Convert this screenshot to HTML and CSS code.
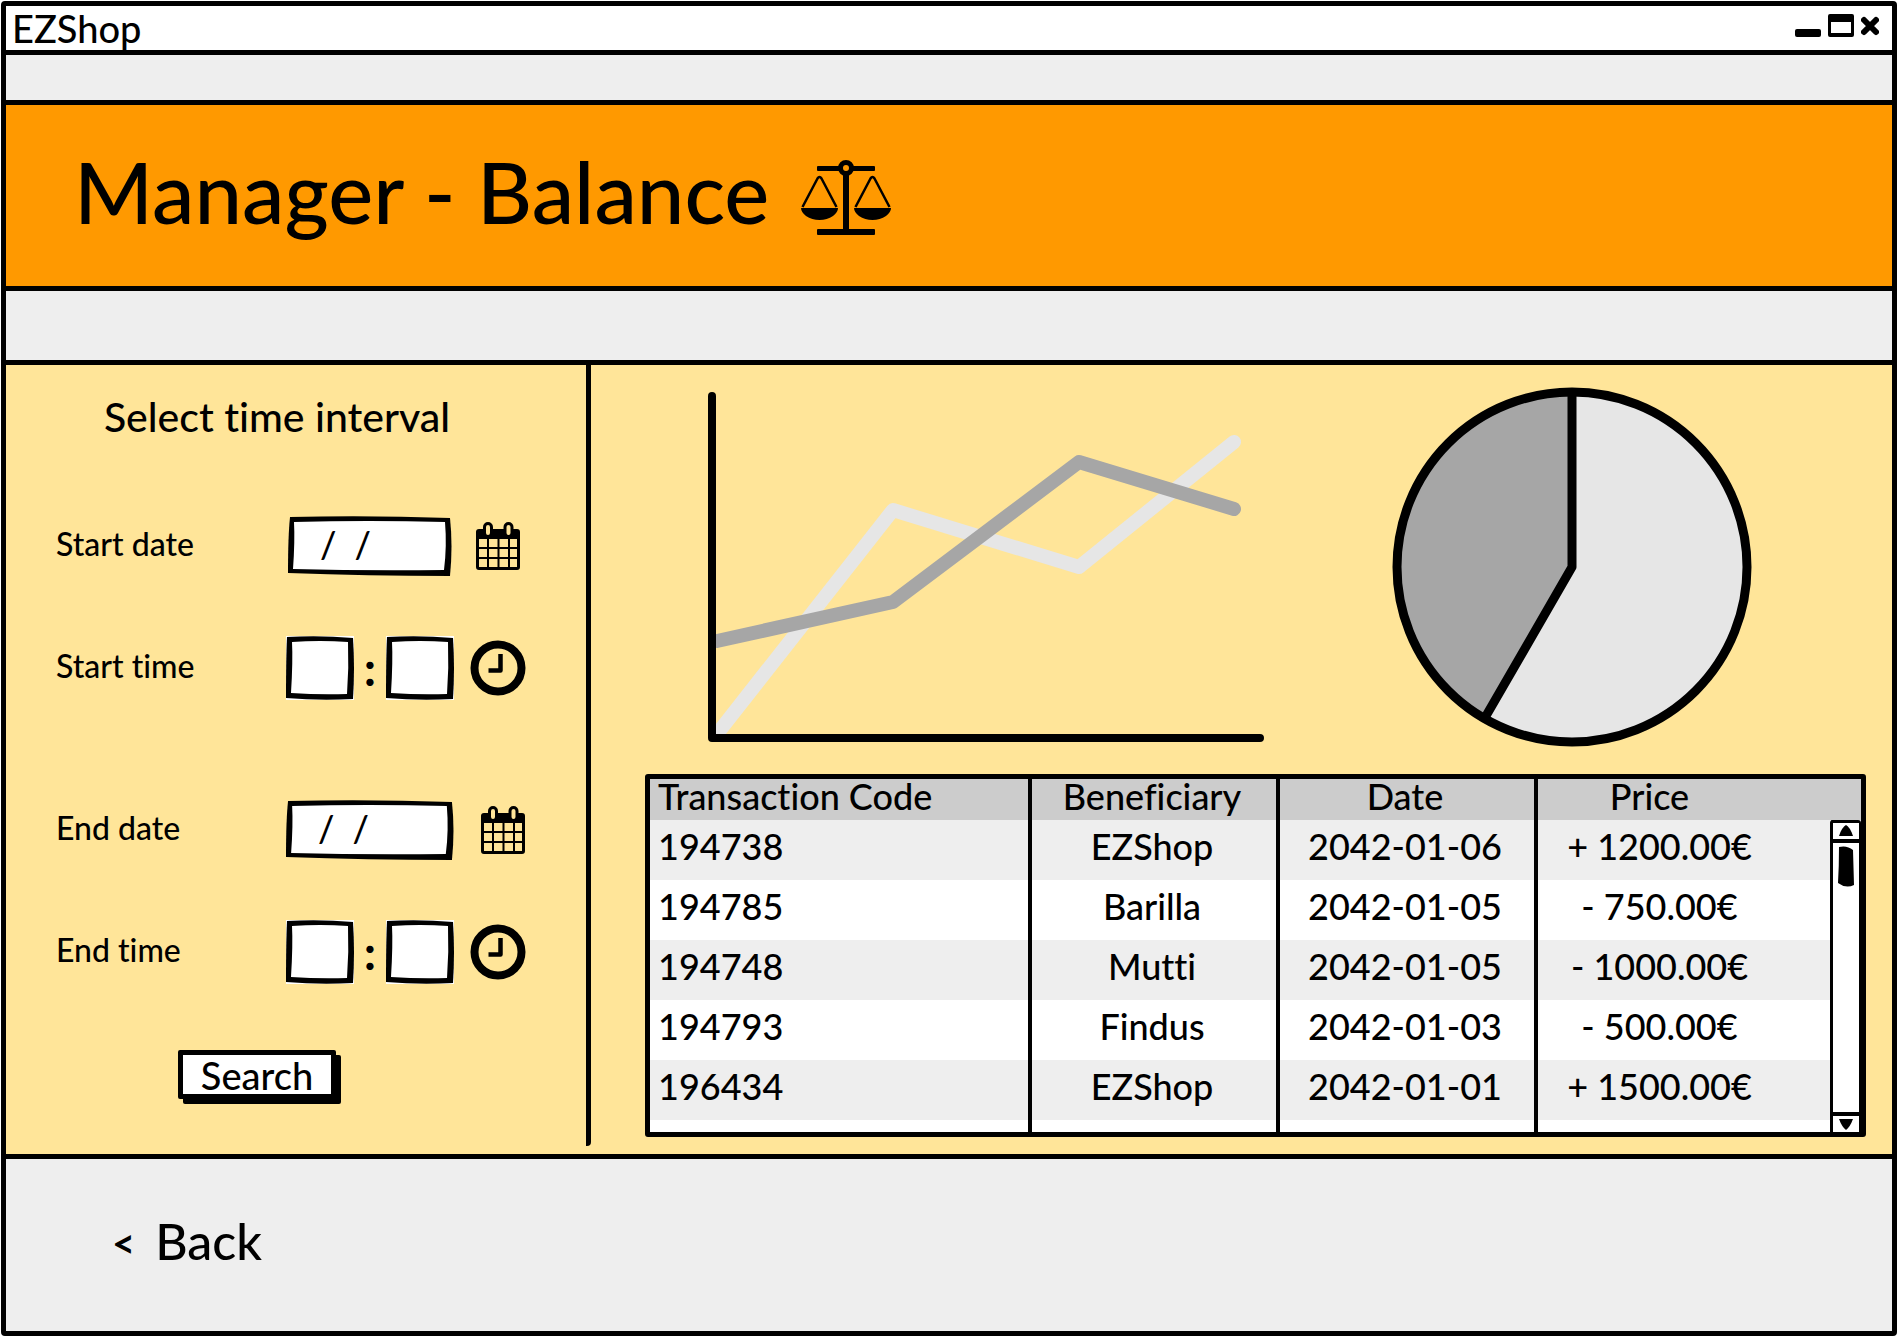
FILE: index.html
```html
<!DOCTYPE html>
<html lang="en">
<head>
<meta charset="utf-8">
<title>EZShop</title>
<meta name="viewport" content="width=device-width, initial-scale=1">
<link rel="stylesheet" href="styles.css">
</head>
<body>
<div class="window">
  <div class="titlebar">
    <span class="titlebar-name">EZShop</span>
    <div class="titlebar-controls">
      <button class="control" type="button" aria-label="Minimize"><svg width="26" height="24" viewBox="0 0 26 24"><rect y="15" width="26" height="8" rx="2"/></svg></button>
      <button class="control" type="button" aria-label="Maximize"><svg width="26" height="24" viewBox="0 0 26 24"><path fill-rule="evenodd" d="M2 0H24Q26 0 26 2V21Q26 23 24 23H2Q0 23 0 21V2Q0 0 2 0ZM3 8V19H23V8Z"/></svg></button>
      <button class="control" type="button" aria-label="Close"><svg width="18" height="24" viewBox="0 0 18 24"><path d="M3 6L15 18M15 6L3 18" stroke="#000" stroke-width="6" stroke-linecap="round"/></svg></button>
    </div>
  </div>

  <header class="banner">
    <h1 class="banner-title">Manager - Balance</h1>
    <svg class="banner-icon" width="90" height="76" viewBox="0 0 90 76" aria-hidden="true">
      <rect x="16" y="6" width="58" height="5" rx="1"/>
      <rect x="16" y="69" width="58" height="6" rx="1"/>
      <rect x="42" y="10" width="6" height="62"/>
      <circle cx="45" cy="8" r="5.5" fill="#ff9900" stroke="#000" stroke-width="5"/>
      <g fill="none" stroke="#000" stroke-width="2.5" stroke-linejoin="round">
        <path d="M1.5 47L16.500 18.500Q18.500 15.500 20.500 18.500L35.500 47"/>
        <path d="M54.500 47L69.500 18.500Q71.500 15.500 73.500 18.500L88.500 47"/>
      </g>
      <path d="M0 48H37Q37 52 32 56Q26 60 18.500 60Q11 60 5 56Q0 52 0 48Z"/>
      <path d="M53 48H90Q90 52 85 56Q79 60 71.500 60Q64 60 58 56Q53 52 53 48Z"/>
    </svg>
  </header>

  <main class="content">
    <form class="filter">
      <h2 class="filter-title">Select time interval</h2>
      <div class="filter-group">
        <label class="filter-label" for="start-date">Start date</label>
        <input class="date-box" id="start-date" type="text" value="/  /">
        <svg class="filter-icon" width="46" height="48" viewBox="0 0 46 48" aria-hidden="true"><use href="#calendar"/></svg>

        <label class="filter-label" for="start-hour">Start time</label>
        <div class="time-field">
          <input class="time-box" id="start-hour" type="text">
          <span class="time-colon">:</span>
          <input class="time-box" type="text" aria-label="Start minute">
        </div>
        <svg class="filter-icon" width="56" height="56" viewBox="0 0 56 56" aria-hidden="true"><use href="#clock"/></svg>
      </div>
      <div class="filter-group">
        <label class="filter-label" for="end-date">End date</label>
        <input class="date-box date-box-wide" id="end-date" type="text" value="/  /">
        <svg class="filter-icon filter-icon-end" width="46" height="48" viewBox="0 0 46 48" aria-hidden="true"><use href="#calendar"/></svg>

        <label class="filter-label" for="end-hour">End time</label>
        <div class="time-field">
          <input class="time-box" id="end-hour" type="text">
          <span class="time-colon">:</span>
          <input class="time-box" type="text" aria-label="End minute">
        </div>
        <svg class="filter-icon" width="56" height="56" viewBox="0 0 56 56" aria-hidden="true"><use href="#clock"/></svg>
      </div>
      <button class="search" type="button">Search</button>
    </form>

    <section class="report">
      <div class="charts">
        <svg class="line-chart" viewBox="708 392 556 350" role="img" aria-label="Balance over time">
          <g fill="none" stroke-width="14" stroke-linecap="round" stroke-linejoin="round">
            <path stroke="#e6e6e6" d="M717 734L893 510L1079 567L1234 442"/>
            <path stroke="#a6a6a6" d="M717 641L893 602L1079 462L1234 509"/>
            <path stroke="#000" stroke-width="8" d="M712 396V738H1260"/>
          </g>
        </svg>
        <svg class="pie-chart" viewBox="0 0 360 360" role="img" aria-label="Income and expenses">
          <circle cx="180" cy="180" r="175" fill="#e6e6e6"/>
          <path fill="#a6a6a6" d="M180 180L92.500 331.600A175 175 0 0 1 180 5Z"/>
          <path fill="none" stroke="#000" stroke-width="9" stroke-linejoin="round" d="M180 5V180L92.500 331.600"/>
          <circle cx="180" cy="180" r="175" fill="none" stroke="#000" stroke-width="9"/>
        </svg>
      </div>

      <div class="ledger">
        <table class="ledger-table">
          <colgroup><col class="col-code"><col class="col-beneficiary"><col class="col-date"><col></colgroup>
          <thead>
            <tr><th>Transaction Code</th><th>Beneficiary</th><th>Date</th><th>Price</th></tr>
          </thead>
          <tbody>
            <tr><td>194738</td><td>EZShop</td><td>2042-01-06</td><td>+ 1200.00€</td></tr>
            <tr><td>194785</td><td>Barilla</td><td>2042-01-05</td><td>- 750.00€</td></tr>
            <tr><td>194748</td><td>Mutti</td><td>2042-01-05</td><td>- 1000.00€</td></tr>
            <tr><td>194793</td><td>Findus</td><td>2042-01-03</td><td>- 500.00€</td></tr>
            <tr><td>196434</td><td>EZShop</td><td>2042-01-01</td><td>+ 1500.00€</td></tr>
            <tr class="ledger-rest"><td></td><td></td><td></td><td></td></tr>
          </tbody>
        </table>
        <div class="scrollbar">
          <button class="scroll-arrow" type="button" aria-label="Scroll up"><svg width="16" height="12" viewBox="0 0 16 12"><path d="M1 11Q4 2 8 0Q12 2 15 11Z"/></svg></button>
          <div class="scroll-track">
            <svg class="scroll-thumb" viewBox="0 0 16 41" preserveAspectRatio="none"><path d="M1 1Q9 -1 15 4L16 39Q8 43 0 37Q1 20 1 1Z"/></svg>
          </div>
          <button class="scroll-arrow scroll-arrow-down" type="button" aria-label="Scroll down"><svg width="16" height="12" viewBox="0 0 16 12"><path d="M1 1H15Q12 9 8 12Q4 9 1 1Z"/></svg></button>
        </div>
      </div>
    </section>
  </main>

  <footer class="footer">
    <a class="back" href="#"><span class="back-arrow">&lt;</span><span>Back</span></a>
  </footer>
</div>

<svg class="symbols" width="0" height="0" aria-hidden="true">
  <symbol id="calendar" viewBox="0 0 46 48">
    <path fill-rule="evenodd" d="M4 7H42Q45 7 45 10V45Q45 48 42 48H4Q1 48 1 45V10Q1 7 4 7ZM4 17V45H42V17Z"/>
    <path fill="none" stroke="#000" stroke-width="2" d="M13 16V46M23.500 16V46M34 16V46M3 26H43M3 36H43"/>
    <rect x="9.500" y="1.500" width="7" height="13" rx="3.500" fill="#ffe599" stroke="#000" stroke-width="3"/>
    <rect x="30" y="1.500" width="7" height="13" rx="3.500" fill="#ffe599" stroke="#000" stroke-width="3"/>
  </symbol>
  <symbol id="clock" viewBox="0 0 56 56">
    <circle cx="28" cy="28" r="23.500" fill="none" stroke="#000" stroke-width="8"/>
    <path fill="none" stroke="#000" stroke-width="4.500" stroke-linejoin="round" d="M30.500 14V30.500H18.500"/>
  </symbol>
</svg>
</body>
</html>
```
FILE: styles.css
```css
:root {
  --line: 5px solid #000;
  --paper: #eeeeee;
  --orange: #ff9900;
  --sand: #ffe599;
}

* {
  box-sizing: border-box;
}

body {
  margin: 0;
  background: #fff;
  color: #000;
  font: 500 36px/44px Lato, "Open Sans", sans-serif;
  font-variant-ligatures: none;
}

h1,
h2 {
  margin: 0;
  font-weight: 500;
}

input,
button {
  padding: 0;
  border: 0;
  border-radius: 0;
  background: none;
  color: inherit;
  font: inherit;
}

svg {
  display: block;
}

.symbols {
  position: absolute;
}

.window {
  display: flex;
  flex-direction: column;
  min-height: calc(100vh - 3px);
  margin: 1px 1px 2px;
  border: var(--line);
  border-radius: 4px;
  background: var(--paper);
}

/* Title bar */
.titlebar {
  display: flex;
  align-items: center;
  justify-content: space-between;
  height: 49px;
  padding: 0 13px 0 6px;
  border-bottom: var(--line);
  background: #fff;
}

.titlebar-name {
  font-size: 38px;
}

.titlebar-controls {
  display: flex;
  gap: 7px;
  padding-bottom: 4px;
}

/* Banner */
.banner {
  display: flex;
  align-items: center;
  gap: 32px;
  margin: 45px 0 69px;
  padding: 40px 68px;
  border-top: var(--line);
  border-bottom: var(--line);
  background: var(--orange);
}

.banner-title {
  padding-bottom: 8px;
  font-size: 85px;
  line-height: 93px;
}

.banner-icon {
  margin-top: 4px;
}

/* Main area */
.content {
  display: grid;
  flex: 1;
  grid-template-columns: 585px 1fr;
  border-top: var(--line);
  border-bottom: var(--line);
  background: var(--sand);
}

.filter {
  display: flex;
  flex-direction: column;
  margin-bottom: 8px;
  padding: 30px 50px 0;
  border-right: var(--line);
  border-bottom-right-radius: 4px;
}

.filter-title {
  padding-right: 38px;
  font-size: 41px;
  line-height: 44px;
  text-align: center;
}

.filter-group {
  display: grid;
  grid-template-columns: 214px 168px 56px;
  grid-auto-rows: 64px;
  gap: 58px 16px;
  align-items: center;
  justify-items: center;
  margin-top: 98px;
}

.filter-title + .filter-group {
  margin-top: 75px;
}

.filter-label {
  justify-self: start;
  padding-bottom: 4px;
  font-size: 32px;
  line-height: 40px;
}

.filter-icon-end {
  justify-self: end;
}

.date-box {
  width: 164px;
  height: 60px;
  padding: 0 0 4px 32px;
  background: url("data:image/svg+xml,%3Csvg xmlns='http://www.w3.org/2000/svg' viewBox='0 0 164 60' preserveAspectRatio='none'%3E%3Cpath d='M2 1Q80 -1 162 2Q165 30 162 60Q80 60 0 57Q0 20 2 1Z'/%3E%3Cpath fill='%23fff' d='M6 6Q80 4 157 6Q159 30 156 54Q80 55 5 53Q7 25 6 6Z'/%3E%3C/svg%3E") center / 100% 100%;
}

.date-box-wide {
  width: 168px;
}

.time-field {
  display: flex;
  align-items: center;
  justify-content: space-between;
  width: 168px;
}

.time-box {
  width: 68px;
  height: 64px;
  padding: 0 12px;
  background: #fff url("data:image/svg+xml,%3Csvg xmlns='http://www.w3.org/2000/svg' viewBox='0 0 68 64' preserveAspectRatio='none'%3E%3Cpath d='M1 1Q34 -1 67 2Q69 32 67 63Q34 65 0 62Q0 22 1 1Z'/%3E%3Cpath fill='%23fff' d='M6 6Q34 4 62 6Q63 32 61 58Q34 59 5 57Q7 25 6 6Z'/%3E%3C/svg%3E") center / 100% 100%;
}

.time-colon {
  font-size: 48px;
  font-weight: 700;
}

.search {
  align-self: flex-start;
  width: 158px;
  height: 49px;
  margin: 66px 0 0 122px;
  border: var(--line);
  border-radius: 2px;
  background: #fff;
  box-shadow: 5px 5px 0 #000;
  font-size: 38px;
  line-height: 36px;
}

/* Charts */
.report {
  display: flex;
  flex-direction: column;
  padding: 22px 26px 14px 54px;
}

.charts {
  display: flex;
  align-items: center;
  justify-content: space-between;
  padding: 0 114px 0 63px;
}

.line-chart {
  width: 556px;
}

.pie-chart {
  width: 360px;
}

/* Transactions */
.ledger {
  position: relative;
  margin-top: 27px;
  border: var(--line);
  border-radius: 3px;
  background: #fff;
}

.ledger-table {
  width: 100%;
  border-spacing: 0;
  table-layout: fixed;
}

.col-code {
  width: 382px;
}

.col-beneficiary {
  width: 248px;
}

.col-date {
  width: 258px;
}

.ledger-table th,
.ledger-table td {
  height: 60px;
  padding: 0 4px 8px 0;
  border-right: 4px solid #000;
  text-align: center;
}

.ledger-table th {
  height: 41px;
  padding: 0 4px 0 0;
  background: #cccccc;
  font-weight: 500;
  line-height: 34px;
  vertical-align: top;
}

.ledger-table th:first-child,
.ledger-table td:first-child {
  padding-left: 8px;
  text-align: left;
}

.ledger-table td:last-child {
  padding-right: 80px;
  border-right: 0;
}

.ledger-table th:last-child {
  padding-right: 100px;
  border-right: 0;
}

.ledger-table tbody tr:nth-child(odd) {
  background: var(--paper);
}

.ledger-table .ledger-rest td {
  height: 12px;
  padding: 0;
}

.scrollbar {
  position: absolute;
  top: 41px;
  right: 0;
  bottom: 0;
  display: flex;
  flex-direction: column;
  width: 31px;
  border: 3px solid #000;
  border-right-width: 2px;
  border-bottom: 0;
  border-radius: 3px 3px 0 0;
  background: #fff;
}

.scroll-arrow {
  display: grid;
  place-items: center;
  height: 20px;
  border-bottom: 4px solid #000;
}

.scroll-arrow-down {
  border-top: 4px solid #000;
  border-bottom: 0;
}

.scroll-track {
  flex: 1;
  padding: 3px 5px;
}

.scroll-thumb {
  width: 16px;
  height: 41px;
}

/* Footer */
.footer {
  padding: 52px 106px 60px;
}

.back {
  display: inline-flex;
  align-items: center;
  gap: 20px;
  color: inherit;
  font-size: 50px;
  line-height: 56px;
  text-decoration: none;
}

.back-arrow {
  padding-top: 4px;
  font-size: 40px;
  font-weight: 700;
}
```
